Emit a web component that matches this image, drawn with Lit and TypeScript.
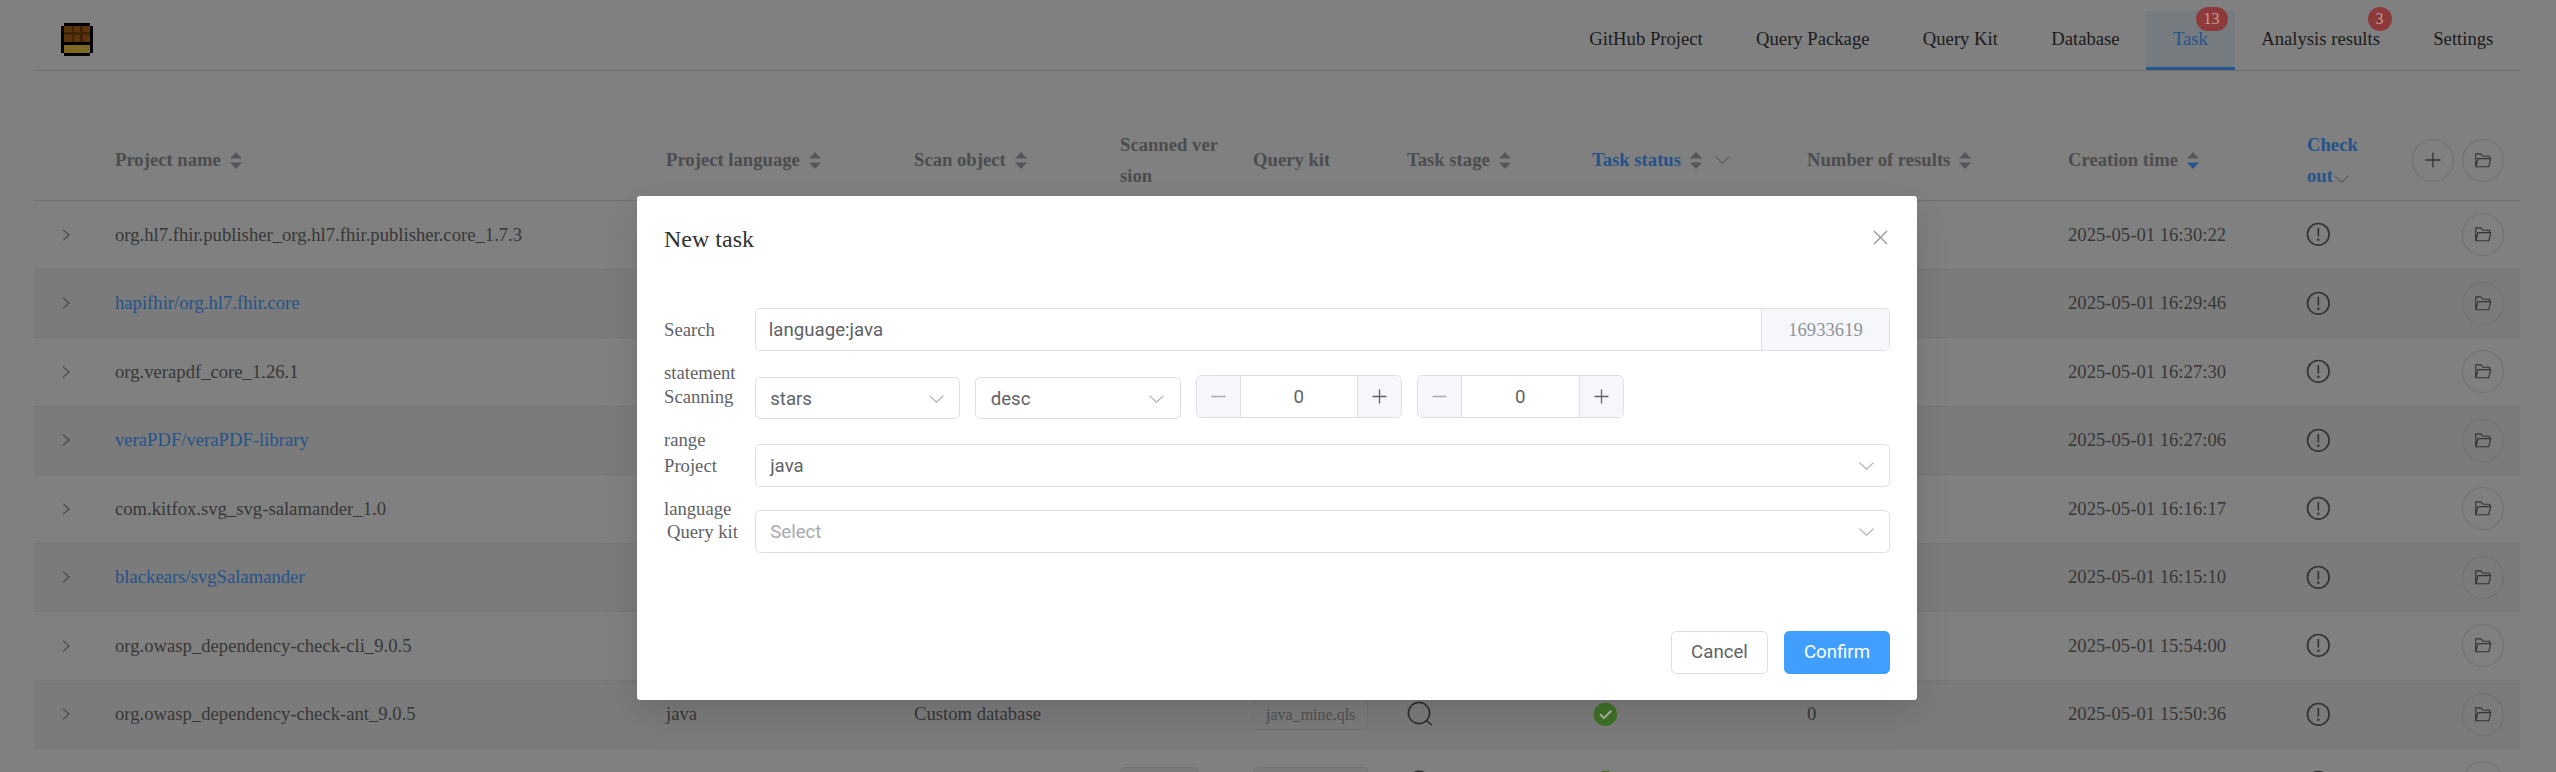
import { LitElement, css, html, svg } from 'lit';
import { customElement } from 'lit/decorators.js';

const NAV = [
    { label: 'GitHub Project' },
    { label: 'Query Package' },
    { label: 'Query Kit' },
    { label: 'Database' },
    { label: 'Task', active: true, badge: '13', badgeClass: 'badge-wide' },
    { label: 'Analysis results', badge: '3', badgeClass: 'badge-narrow' },
    { label: 'Settings' },
];

// rows 1-7 have their middle columns covered by the dialog, row 9 is cut by the window
const ROWS = [
    { name: 'org.hl7.fhir.publisher_org.hl7.fhir.publisher.core_1.7.3', time: '2025-05-01 16:30:22' },
    { name: 'hapifhir/org.hl7.fhir.core', time: '2025-05-01 16:29:46', link: true },
    { name: 'org.verapdf_core_1.26.1', time: '2025-05-01 16:27:30' },
    { name: 'veraPDF/veraPDF-library', time: '2025-05-01 16:27:06', link: true },
    { name: 'com.kitfox.svg_svg-salamander_1.0', time: '2025-05-01 16:16:17' },
    { name: 'blackears/svgSalamander', time: '2025-05-01 16:15:10', link: true },
    { name: 'org.owasp_dependency-check-cli_9.0.5', time: '2025-05-01 15:54:00' },
    { name: 'org.owasp_dependency-check-ant_9.0.5', time: '2025-05-01 15:50:36', detail: true },
    { name: '', time: '', cut: true },
];

const folderIcon = html`<svg class="icon-folder" viewBox="0 0 1024 1024" fill="currentColor">
    <path d="M878.08 448H241.92l-96 384h636.16l96-384zM832 384v-64H485.76L357.504 192H128v448l57.92-231.744A32 32 0 0 1 216.96 384H832zm-24.96 512H96a32 32 0 0 1-32-32V160a32 32 0 0 1 32-32h287.872l128.384 128H864a32 32 0 0 1 32 32v96h23.04a32 32 0 0 1 31.04 39.744l-112 448A32 32 0 0 1 807.04 896z"></path>
</svg>`;

const warningIcon = html`<svg class="icon-warning" viewBox="0 0 1024 1024" fill="currentColor">
    <path d="M512 64a448 448 0 1 1 0 896 448 448 0 0 1 0-896zm0 832a384 384 0 0 0 0-768 384 384 0 0 0 0 768zm48-176a48 48 0 1 1-96 0 48 48 0 0 1 96 0zm-48-464a32 32 0 0 1 32 32v288a32 32 0 0 1-64 0V288a32 32 0 0 1 32-32z"></path>
</svg>`;

const checkIcon = html`<svg class="icon-check" viewBox="0 0 1024 1024">
    <circle cx="512" cy="512" r="448" fill="#3e7026"></circle>
    <path fill="#a9b8a0" d="M456.192 600.384l-99.52-99.584a38.4 38.4 0 1 0-54.336 54.336l126.72 126.72a38.272 38.272 0 0 0 54.336 0l262.4-262.464a38.4 38.4 0 1 0-54.272-54.336L456.192 600.384z"></path>
</svg>`;

const stageIcon = html`<svg class="icon-stage" viewBox="0 0 26 26" fill="none" stroke="currentColor" stroke-width="1.6">
    <circle cx="12" cy="12" r="10.6"></circle>
    <path d="M19.4 19.6 24.4 23.6" stroke-linecap="round"></path>
</svg>`;

const chevronRight = html`<svg class="chevron-right" viewBox="0 0 8 12" fill="none" stroke="currentColor" stroke-width="1.1">
    <polyline points="1,0.6 7,6 1,11.4"></polyline>
</svg>`;

const chevronDown = html`<svg class="chevron-down" viewBox="0 0 15 8" fill="none" stroke="currentColor" stroke-width="1.1">
    <polyline points="0.5,0.6 7.5,7.2 14.5,0.6"></polyline>
</svg>`;

const sortIcon = (active = false) => html`<svg class="sort" viewBox="0 0 12 17">
    <path class="caret" d="M6 0 12 6.6H0z"></path>
    <path class="caret ${active ? 'caret-on' : ''}" d="M6 17 12 10.6H0z"></path>
</svg>`;

const logo = svg`<svg class="logo" viewBox="0 0 32 33" shape-rendering="crispEdges">
    <path fill="#000" d="M3 0h26v3h3v27h-3v3H3v-3H0V3h3z"></path>
    <rect x="3" y="3" width="26" height="16" fill="#5c340b"></rect>
    <rect x="3" y="9" width="26" height="3" fill="#412407"></rect>
    <rect x="10.5" y="3" width="2.5" height="16" fill="#412407"></rect>
    <rect x="19" y="3" width="2.5" height="16" fill="#412407"></rect>
    <rect x="3" y="22" width="26" height="8" fill="#7c6821"></rect>
</svg>`;

@customElement('app-root')
export class AppRoot extends LitElement {
    static styles = css`
        :host {
            display: block;
            position: relative;
            width: 2556px;
            height: 772px;
            overflow: hidden;
            background: #808080;
            font-family: 'Liberation Serif', serif;
            font-size: 18.67px;
            color: #373737;
        }

        /* top bar */
        .topbar {
            display: flex;
            justify-content: space-between;
            align-items: flex-end;
            height: 70px;
            margin: 0 36px 0 34px;
            padding-left: 27px;
            border-bottom: 1px solid #6d6d6d;
            box-sizing: content-box;
        }

        .logo {
            width: 32px;
            height: 33px;
            margin-bottom: 14px;
        }

        .nav {
            display: flex;
        }

        .nav-item {
            position: relative;
            display: flex;
            align-items: center;
            box-sizing: border-box;
            height: 59px;
            padding: 0 26.67px 0;
            border-bottom: 3px solid transparent;
            color: #1b1b1c;
        }

        .nav-item.active {
            color: #24538a;
            background: #767b80;
            border-bottom-color: #24558e;
        }

        .badge {
            position: absolute;
            top: -4px;
            height: 24px;
            border-radius: 12px;
            background: #8e3a3a;
            color: #c49c9c;
            font-size: 16px;
            line-height: 24px;
            text-align: center;
        }

        .badge-wide {
            right: 7px;
            width: 32px;
        }

        .badge-narrow {
            right: 15px;
            width: 24px;
        }

        /* table */
        .table {
            margin: 49px 36px 0 34px;
        }

        .tr {
            display: grid;
            grid-template-columns: 81px 551px 248px 206px 133px 154px 185px 215px 261px 239px 105px 108px;
            align-items: center;
            box-sizing: border-box;
            border-bottom: 1px solid #767678;
        }

        .thead {
            height: 81px;
            font-weight: 700;
            color: #4c4c4e;
            border-bottom-color: #6f6f70;
        }

        .row {
            height: 68.5px;
        }

        .row:nth-child(odd) {
            background: #7b7b7b;
        }

        .th {
            display: flex;
            align-items: center;
            gap: 9px;
            white-space: nowrap;
        }

        .th-active {
            color: #24538a;
        }

        .th-wrap {
            display: block;
            line-height: 31px;
            white-space: normal;
        }

        .th-version {
            width: 101px;
            word-break: break-all;
        }

        .th-check {
            width: 80px;
        }

        .sort {
            flex: none;
            width: 12px;
            height: 17px;
        }

        .caret {
            fill: #55565a;
        }

        .caret-on {
            fill: #24558e;
        }

        .chevron-right {
            display: block;
            width: 8px;
            height: 12px;
            margin-left: 28px;
            color: #454545;
        }

        .chevron-down {
            flex: none;
            width: 15px;
            height: 8px;
            color: #5a5a5a;
        }

        .th .chevron-down {
            margin-left: 4px;
        }

        .th-check .chevron-down {
            margin-left: 1px;
            vertical-align: -1px;
        }

        .link {
            color: #24538a;
        }

        .tag {
            display: inline-block;
            box-sizing: border-box;
            height: 31px;
            padding: 0 12px;
            border: 1px solid #747474;
            border-radius: 5px;
            background: #7b7b7b;
            color: #505052;
            font-size: 16px;
            line-height: 29px;
            vertical-align: middle;
        }

        .tag-version {
            width: 79px;
        }

        .tag-kit {
            width: 115px;
        }

        .icon-stage {
            display: block;
            width: 26px;
            height: 26px;
            color: #303030;
        }

        .icon-check {
            display: block;
            width: 26.67px;
            height: 26.67px;
        }

        .icon-warning {
            display: block;
            width: 26.67px;
            height: 26.67px;
            margin-left: -2px;
            color: #333;
        }

        .actions {
            display: flex;
            justify-content: flex-end;
            gap: 8px;
            padding-right: 16px;
        }

        .round {
            display: flex;
            align-items: center;
            justify-content: center;
            box-sizing: border-box;
            width: 42px;
            height: 43px;
            border: 1px solid #6f6f70;
            border-radius: 50%;
            color: #333;
        }

        .icon-folder {
            width: 18.67px;
            height: 18.67px;
        }

        .icon-plus {
            width: 16px;
            height: 16px;
        }

        /* dialog */
        .mask {
            position: absolute;
            inset: 0;
            display: flex;
            justify-content: center;
            align-items: flex-start;
            padding-right: 2px;
        }

        .dialog {
            box-sizing: border-box;
            width: 1280px;
            height: 504px;
            margin-top: 196px;
            padding: 27px 27px;
            border-radius: 3px;
            background: #fff;
            box-shadow:
                0 16px 42px 5px rgba(0, 0, 0, 0.04),
                0 10px 26px rgba(0, 0, 0, 0.08);
        }

        .dialog-head {
            display: flex;
            justify-content: space-between;
            align-items: center;
            height: 32px;
            margin-bottom: 53px;
            color: #303133;
            font-size: 24px;
        }

        .close {
            width: 15px;
            height: 15px;
            margin-right: 2px;
            margin-top: -3px;
            color: #909399;
        }

        .field {
            display: grid;
            grid-template-columns: 90.5px 1fr;
            height: 43px;
        }

        .field-search {
            margin-bottom: 24px;
        }

        .field-range {
            margin-bottom: 26px;
        }

        .field-language {
            margin-bottom: 23px;
        }

        .field-label {
            height: 43px;
            line-height: 43px;
            color: #606266;
        }

        .field-label-kit {
            padding-left: 3px;
        }

        .control {
            display: flex;
            align-items: center;
            justify-content: space-between;
            box-sizing: border-box;
            height: 43px;
            padding: 1px 14.67px 0;
            border: 1.33px solid #dcdfe6;
            border-radius: 5.33px;
            color: #606266;
            font-family: Roboto, sans-serif;
        }

        .control .chevron-down {
            color: #a8abb2;
            margin-right: 0.5px;
        }

        .placeholder {
            color: #a8abb2;
        }

        .search-group {
            display: flex;
            box-sizing: border-box;
            height: 43px;
            border: 1.33px solid #dcdfe6;
            border-radius: 5.33px;
            overflow: hidden;
        }

        .search-input {
            flex: 1;
            display: flex;
            align-items: center;
            padding: 1px 13.33px 0;
            color: #606266;
            font-family: Roboto, sans-serif;
        }

        .addon {
            display: flex;
            align-items: center;
            justify-content: center;
            width: 127px;
            border-left: 1.33px solid #dcdfe6;
            background: #f5f7fa;
            color: #909399;
        }

        .range {
            display: flex;
            gap: 15px;
        }

        .range .control {
            width: 205.5px;
            height: 42px;
            margin-top: 2px;
        }

        .stepper {
            display: flex;
            box-sizing: border-box;
            width: 206.5px;
            height: 43px;
            border: 1.33px solid #dcdfe6;
            border-radius: 5.33px;
            overflow: hidden;
        }

        .step {
            display: flex;
            align-items: center;
            justify-content: center;
            width: 43px;
            background: #f5f7fa;
            color: #606266;
        }

        .step-minus {
            border-right: 1.33px solid #dcdfe6;
            color: #a8abb2;
        }

        .step-plus {
            border-left: 1.33px solid #dcdfe6;
        }

        .step svg {
            width: 15px;
            height: 15px;
        }

        .step-value {
            flex: 1;
            text-align: center;
            line-height: 42px;
            color: #606266;
            font-family: Roboto, sans-serif;
        }

        .dialog-foot {
            display: flex;
            justify-content: flex-end;
            gap: 16px;
            margin-top: 78px;
        }

        .btn {
            box-sizing: border-box;
            height: 43px;
            padding: 0 19px;
            border: 1.33px solid #dcdfe6;
            border-radius: 5.33px;
            background: #fff;
            color: #606266;
            font-family: Roboto, sans-serif;
            font-size: 18.67px;
            line-height: 40px;
        }

        .btn-primary {
            border-color: #409eff;
            background: #409eff;
            color: #fff;
        }
    `;

    private renderStepper() {
        return html`<div class="stepper">
            <div class="step step-minus">
                <svg viewBox="0 0 15 15" stroke="currentColor" stroke-width="1.3"><path d="M0.5 7.5h14"></path></svg>
            </div>
            <div class="step-value">0</div>
            <div class="step step-plus">
                <svg viewBox="0 0 15 15" stroke="currentColor" stroke-width="1.3"><path d="M0.5 7.5h14M7.5 0.5v14"></path></svg>
            </div>
        </div>`;
    }

    private renderRow(row: (typeof ROWS)[number]) {
        return html`<div class="tr row">
            <div>${row.cut ? '' : chevronRight}</div>
            <div class=${row.link ? 'link' : ''}>${row.name}</div>
            <div>${row.detail ? 'java' : ''}</div>
            <div>${row.detail ? 'Custom database' : ''}</div>
            <div>${row.cut ? html`<span class="tag tag-version"></span>` : ''}</div>
            <div>
                ${row.detail ? html`<span class="tag">java_mine.qls</span>` : ''}
                ${row.cut ? html`<span class="tag tag-kit"></span>` : ''}
            </div>
            <div>${row.detail || row.cut ? stageIcon : ''}</div>
            <div>${row.detail || row.cut ? checkIcon : ''}</div>
            <div>${row.detail ? '0' : ''}</div>
            <div>${row.time}</div>
            <div>${warningIcon}</div>
            <div class="actions"><div class="round">${folderIcon}</div></div>
        </div>`;
    }

    render() {
        return html`
            <header class="topbar">
                ${logo}
                <nav class="nav">
                    ${NAV.map(
                        (item) => html`<div class="nav-item ${item.active ? 'active' : ''}">
                            ${item.label}
                            ${item.badge ? html`<span class="badge ${item.badgeClass}">${item.badge}</span>` : ''}
                        </div>`,
                    )}
                </nav>
            </header>

            <section class="table">
                <div class="tr thead">
                    <div></div>
                    <div class="th">Project name ${sortIcon()}</div>
                    <div class="th">Project language ${sortIcon()}</div>
                    <div class="th">Scan object ${sortIcon()}</div>
                    <div class="th th-wrap th-version">Scanned version</div>
                    <div class="th">Query kit</div>
                    <div class="th">Task stage ${sortIcon()}</div>
                    <div class="th th-active">Task status ${sortIcon()} ${chevronDown}</div>
                    <div class="th">Number of results ${sortIcon()}</div>
                    <div class="th">Creation time ${sortIcon(true)}</div>
                    <div class="th th-wrap th-check th-active">Check out${chevronDown}</div>
                    <div class="actions">
                        <div class="round">
                            <svg class="icon-plus" viewBox="0 0 16 16" stroke="currentColor" stroke-width="1.3"><path d="M0.5 8h15M8 0.5v15"></path></svg>
                        </div>
                        <div class="round">${folderIcon}</div>
                    </div>
                </div>
                ${ROWS.map((row) => this.renderRow(row))}
            </section>

            <div class="mask">
                <div class="dialog">
                    <div class="dialog-head">
                        <span>New task</span>
                        <svg class="close" viewBox="0 0 15 15" stroke="currentColor" stroke-width="1.2"><path d="M1 1l13 13M14 1L1 14"></path></svg>
                    </div>

                    <div class="field field-search">
                        <div class="field-label">Search statement</div>
                        <div class="search-group">
                            <div class="search-input">language:java</div>
                            <div class="addon">16933619</div>
                        </div>
                    </div>

                    <div class="field field-range">
                        <div class="field-label">Scanning range</div>
                        <div class="range">
                            <div class="control">stars ${chevronDown}</div>
                            <div class="control">desc ${chevronDown}</div>
                            ${this.renderStepper()} ${this.renderStepper()}
                        </div>
                    </div>

                    <div class="field field-language">
                        <div class="field-label">Project language</div>
                        <div class="control">java ${chevronDown}</div>
                    </div>

                    <div class="field">
                        <div class="field-label field-label-kit">Query kit</div>
                        <div class="control"><span class="placeholder">Select</span> ${chevronDown}</div>
                    </div>

                    <div class="dialog-foot">
                        <div class="btn">Cancel</div>
                        <div class="btn btn-primary">Confirm</div>
                    </div>
                </div>
            </div>
        `;
    }
}
